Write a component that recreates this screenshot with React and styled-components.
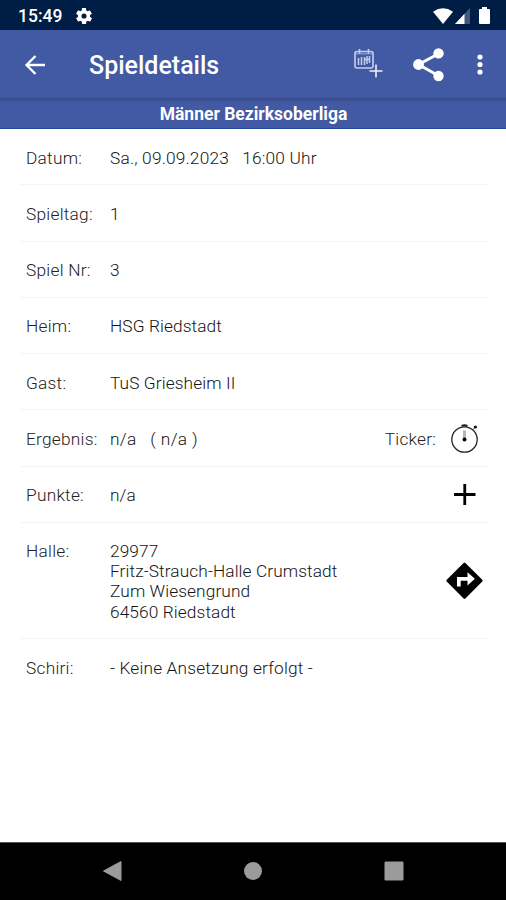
import React from "react";
import styled, { createGlobalStyle } from "styled-components";

const GlobalStyle = createGlobalStyle`
  * { box-sizing: border-box; }
  body { margin: 0; background: #fff; overflow: hidden; }
`;

const Screen = styled.div`
  width: 506px;
  height: 900px;
  display: flex;
  flex-direction: column;
  background: #fff;
  color: #141414;
  font-family: Roboto, "Liberation Sans", sans-serif;
`;

const StatusBar = styled.header`
  height: 30px;
  flex: none;
  display: flex;
  align-items: center;
  padding: 1px 16px 0 18px;
  background: #001d45;
  color: #fff;
`;

const Clock = styled.time`
  width: 58px;
  font-size: 17.5px;
  line-height: 20px;
  font-weight: 500;
`;

const StatusIcons = styled.div`
  display: flex;
  align-items: center;
  margin-left: auto;
`;

const Icon = styled.svg`
  display: block;
  flex: none;
  overflow: visible;
  margin-left: ${(p) => p.$gap || 0}px;
`;

const AppBar = styled.nav`
  height: 70px;
  flex: none;
  display: flex;
  align-items: center;
  padding: 0 23px 0 25px;
  background: linear-gradient(#4259a3 0 67px, #364a87 69px, #3b5094 70px);
  color: #fff;
`;

const Title = styled.h1`
  flex: 1;
  margin: 2px 0 0 44px;
  font-size: 25px;
  line-height: 30px;
  font-weight: 500;
`;

const League = styled.h2`
  height: 29px;
  flex: none;
  margin: 0;
  padding-left: 1px;
  border-bottom: 1px solid #1d4c9b;
  background: linear-gradient(#3d5297, #4259a3 4px);
  color: #fff;
  text-align: center;
  font-size: 17.5px;
  line-height: 28px;
  font-weight: 700;
`;

const Details = styled.main`
  flex: 1;
  padding: 0 18px 0 20px;
`;

const Row = styled.section`
  height: ${(p) => (p.$tall ? 116.3 : 56.25)}px;
  display: flex;
  padding: 18.5px 4px 0 6px;
  border-bottom: ${(p) => (p.$last ? "none" : "1px solid #f4f4f4")};
  font-size: 17.3px;
  line-height: 20.1px;
  font-weight: 300;
`;

const Label = styled.div`
  width: 84px;
  flex: none;
  color: #222;
  letter-spacing: 0.25px;
`;

const Value = styled.div`
  flex: 1;
  white-space: pre;
  letter-spacing: ${(p) => p.$track ?? 0.1}px;
`;

const Action = styled.div`
  display: flex;
  align-items: center;
  align-self: flex-start;
  height: ${(p) => (p.$tall ? 80 : 20)}px;
  color: #222;
  letter-spacing: 0.2px;
`;

const NavBar = styled.footer`
  height: 58px;
  flex: none;
  display: flex;
  align-items: center;
  justify-content: space-between;
  padding: 0 102px 1px 102px;
  border-top: 1px solid #555;
  background: #000;
`;

const Stopwatch = () => (
  <Icon width="34" height="32" viewBox="0 0 34 32" $gap={14}>
    <circle cx="14.500" cy="16.500" r="12.700" fill="none" stroke="#222" strokeWidth="1.300" />
    <path d="M11.500 3Q14.500 1.300 17.500 3" fill="none" stroke="#222" strokeWidth="2" />
    <path d="M23 6.500l2-2" stroke="#333" strokeWidth="1" />
    <circle cx="25.400" cy="4" r="1.600" fill="#111" />
    <path d="M14.500 7.500v9" stroke="#b5b5b5" strokeWidth="3" />
    <circle cx="14.500" cy="16.500" r="2" fill="#000" />
  </Icon>
);

const rows = [
  { label: "Datum:", value: "Sa., 09.09.2023   16:00 Uhr", track: 0.19 },
  { label: "Spieltag:", value: "1" },
  { label: "Spiel Nr:", value: "3" },
  { label: "Heim:", value: "HSG Riedstadt" },
  { label: "Gast:", value: "TuS Griesheim II" },
  {
    label: "Ergebnis:",
    value: "n/a   ( n/a )",
    track: 0.35,
    action: (
      <>
        Ticker:
        <Stopwatch />
      </>
    ),
  },
  {
    label: "Punkte:",
    value: "n/a",
    action: (
      <Icon width="38" height="22" viewBox="0 0 38 22">
        <path d="M8 10.500h21.500M18.750 0v21" stroke="#000" strokeWidth="2.800" />
      </Icon>
    ),
  },
  {
    label: "Halle:",
    value: "29977\nFritz-Strauch-Halle Crumstadt\nZum Wiesengrund\n64560 Riedstadt",
    tall: true,
    action: (
      <Icon width="38" height="38" viewBox="0 0 38 38">
        <path d="M18.500 1.800L35.400 18.700 18.500 35.600 1.600 18.700z" fill="#000" stroke="#000" strokeWidth="2.500" strokeLinejoin="round" />
        <path d="M11 24.500V15h10.500v-4.800l7.400 6.600-7.400 6.600v-4.700h-6.800v5.800z" fill="#fff" />
      </Icon>
    ),
  },
  { label: "Schiri:", value: "- Keine Ansetzung erfolgt -", track: 0.16, last: true },
];

export default function App() {
  return (
    <Screen>
      <GlobalStyle />
      <StatusBar>
        <Clock>15:49</Clock>
        <Icon width="16" height="16" viewBox="2 2 20 20">
          <path
            fill="#fff"
            d="M19.4 13c.1-.3.1-.7.1-1s0-.7-.1-1l2.1-1.6c.2-.2.3-.4.1-.7l-2-3.4c-.1-.3-.4-.3-.6-.3l-2.5 1c-.5-.4-1.1-.7-1.7-1l-.4-2.6c0-.2-.2-.4-.5-.4h-4c-.2 0-.4.2-.5.4L9.200 5c-.6.3-1.200.6-1.700 1L5 5c-.2-.1-.5 0-.6.200l-2 3.500c-.1.200-.1.500.1.700L4.600 11c0 .300-.1.700-.1 1s0 .700.1 1l-2.100 1.600c-.2.200-.2.400-.1.700l2 3.400c.1.300.4.300.6.300l2.500-1c.5.400 1.100.700 1.700 1l.4 2.600c0 .200.2.400.5.400h4c.2 0 .4-.2.500-.4l.4-2.600c.6-.3 1.200-.6 1.700-1l2.500 1c.2.100.5 0 .6-.200l2-3.500c.1-.200.1-.500-.1-.700zM12 15.200a3.200 3.200 0 1 1 0-6.400 3.200 3.200 0 0 1 0 6.400z"
          />
        </Icon>
        <StatusIcons>
          <Icon width="20" height="16" viewBox="0 0 20 16">
            <path d="M0 3.700Q10-3 20 3.700L10 16z" fill="#fff" />
          </Icon>
          <Icon width="15" height="16" viewBox="0 0 15 16" $gap={2}>
            <path d="M15 0v16H0z" fill="#40597a" />
            <path d="M9.500 5.800V16H0z" fill="#fff" />
          </Icon>
          <Icon width="11" height="17" viewBox="0 0 11 17" $gap={9}>
            <path d="M3 0h5v2h2q1 0 1 1v13q0 1-1 1H1q-1 0-1-1V3q0-1 1-1h2z" fill="#fff" />
          </Icon>
        </StatusIcons>
      </StatusBar>
      <AppBar>
        <Icon width="20" height="20" viewBox="0 0 20 20">
          <path d="M10.500 1L1.500 10l9 9M1.500 10H20" fill="none" stroke="#fff" strokeWidth="2.300" />
        </Icon>
        <Title>Spieldetails</Title>
        <Icon width="29" height="32" viewBox="0 0 29 32">
          <g fill="none" stroke="#c5cfec">
            <rect x="1" y="2.500" width="18" height="16.500" rx="2" strokeWidth="1.600" />
            <path d="M1 4.800h18" strokeWidth="1.200" opacity=".6" />
            <path d="M5.500 0v4.500M14.500 0v4.500" strokeWidth="1.600" />
            <path d="M4.500 9v7M7.500 8v8M10.500 8v8M13 7v8M15.500 7v7M10 10.500h6" strokeWidth="1.500" />
            <path d="M15.500 22h13M22 15.500v13" stroke="#eef1fb" strokeWidth="1.600" />
          </g>
        </Icon>
        <Icon width="32" height="34" viewBox="0 0 32 34" $gap={30}>
          <path d="M26 5.500L5.500 16.500 26 28" fill="none" stroke="#fff" strokeWidth="3" />
          <g fill="#fff">
            <circle cx="25.500" cy="5.400" r="5.200" />
            <circle cx="5.500" cy="16.500" r="5.400" />
            <circle cx="25.500" cy="28" r="5.200" />
          </g>
        </Icon>
        <Icon width="6" height="22" viewBox="0 0 6 22" $gap={32}>
          <g fill="#fff">
            <circle cx="3" cy="3" r="2.600" />
            <circle cx="3" cy="10.500" r="2.600" />
            <circle cx="3" cy="18" r="2.600" />
          </g>
        </Icon>
      </AppBar>
      <League>Männer Bezirksoberliga</League>
      <Details>
        {rows.map((r) => (
          <Row key={r.label} $tall={r.tall} $last={r.last}>
            <Label>{r.label}</Label>
            <Value $track={r.track}>{r.value}</Value>
            {r.action && <Action $tall={r.tall}>{r.action}</Action>}
          </Row>
        ))}
      </Details>
      <NavBar>
        <Icon width="20" height="22" viewBox="0 0 20 22">
          <path d="M19 1.500v19L1.500 11z" fill="#9b9b9b" stroke="#9b9b9b" strokeLinejoin="round" />
        </Icon>
        <Icon width="18" height="18" viewBox="0 0 18 18">
          <circle cx="9" cy="9" r="9" fill="#9b9b9b" />
        </Icon>
        <Icon width="20" height="20" viewBox="0 0 20 20">
          <rect x=".5" y=".5" width="19" height="19" rx="1.200" fill="#9b9b9b" />
        </Icon>
      </NavBar>
    </Screen>
  );
}
